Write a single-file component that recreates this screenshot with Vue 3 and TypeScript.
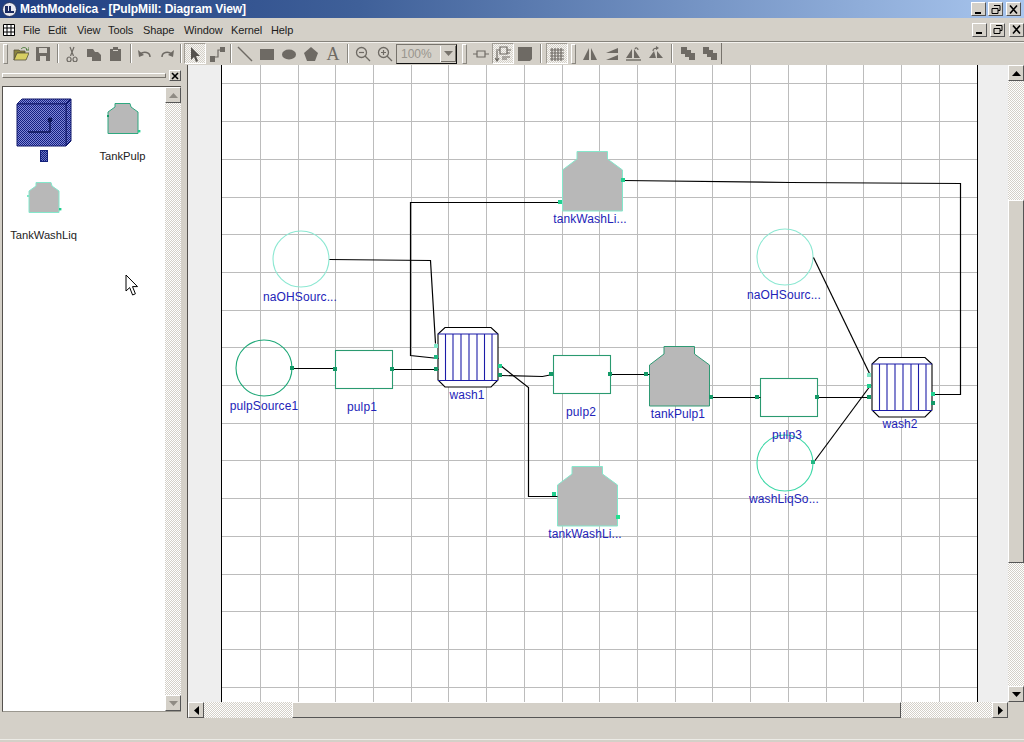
<script setup lang="ts">
interface Shape { d: string; fill?: string; stroke?: string; sw?: number }
interface Tool { kind: 'btn' | 'sep' | 'grip' | 'combo'; w: number; pressed?: boolean; txt?: string; shapes?: Shape[] }

const G = '#6e6a64'
const gs = (d: string): Shape => ({ d, fill: G })
const gl = (d: string, sw = 1.2): Shape => ({ d, fill: 'none', stroke: G, sw })
const btn = (shapes: Shape[], pressed = false): Tool => ({ kind: 'btn', w: 22, shapes, pressed })
const sep = (w: number): Tool => ({ kind: 'sep', w })

const tools: Tool[] = [
  { kind: 'grip', w: 10 },
  btn([
    { d: 'M1 14V4h5l1 1h5v2H4L1 14z', fill: '#8a8440', stroke: '#55523a', sw: 0.8 },
    { d: 'M1 14l3-7h12l-3 7z', fill: '#d8cf62', stroke: '#55523a', sw: 0.8 },
    { d: 'M8 3c2-2 4-2 6 0l-1 1h3v-3', fill: 'none', stroke: '#4c7a3c', sw: 1 },
  ]),
  btn([gs('M1 1h14v14H1z'), { d: 'M4 2h8v5H4z', fill: '#d4d0c8' }, { d: 'M5 10h6v5H5z', fill: '#d4d0c8' }]),
  sep(7),
  btn([gl('M6.5 10L10 1M9.5 10L6 1'), gl('M5 11a2 2.4 0 1 0 .1 0zM11 11a2 2.4 0 1 0 .1 0z')]),
  btn([gs('M1 3h6l2 3v5H1z'), gs('M6 6h6l3 3v6H6z')]),
  btn([gs('M2 3h3V1h5v2h3v12H2z'), { d: 'M5 4h5v1H5z', fill: '#d4d0c8' }]),
  sep(7),
  btn([gl('M13 11C13 6 7 5 3 8', 1.5), gs('M1 4l1 7 5-2z')]),
  btn([gl('M3 11C3 6 9 5 13 8', 1.5), gs('M15 4l-1 7-5-2z')]),
  sep(6),
  btn([{ d: 'M4 1v13l3-3 2 5 2-1-2-5h4z', fill: '#55524e' }], true),
  btn([gs('M1 10h5v6H1z'), gs('M11 1h5v5h-5z'), gl('M6 11h3V4h2')]),
  sep(6),
  btn([gl('M1 1L15 15', 1.4)]),
  btn([gs('M1 3h14v11H1z')]),
  btn([gs('M1 8.5a7 5 0 1 0 14 0a7 5 0 1 0-14 0z')]),
  btn([gs('M8 1l7 6-3 8H4L1 7z')]),
  { kind: 'btn', w: 22, txt: 'A' },
  sep(8),
  btn([gl('M1.5 6.5a5 5 0 1 0 10 0a5 5 0 1 0-10 0zM10 10l5 5', 1.3), gl('M4 6.5h5')]),
  btn([gl('M1.5 6.5a5 5 0 1 0 10 0a5 5 0 1 0-10 0zM10 10l5 5', 1.3), gl('M4 6.5h5M6.5 4v5')]),
  { kind: 'combo', w: 62 },
  { kind: 'grip', w: 12 },
  btn([gl('M4 5h8v6H4zM0 8h4M12 8h4')]),
  btn([gl('M5 1h7v7H5zM2 5v9M0 12l2 3 2-3M12 4h4M5 4H1M12 7h3M7 11h8M7 13h5')], true),
  btn([gs('M1 1h14v12l-2 2H1z')]),
  sep(10),
  btn([gl('M3 2v13M6 2v13M9 2v13M12 2v13M1 4h14M1 7h14M1 10h14M1 13h14')], true),
  { kind: 'grip', w: 11 },
  btn([gs('M7 2v12H1z'), gs('M9 2v12h6z')]),
  btn([gs('M14 2v5H2z'), gs('M14 9v5H2z')]),
  btn([gs('M6 3v9H0z'), gs('M8 3v9h6z'), gl('M0 14h15', 1.4), gl('M9 3c1-2 3-1 3 1')]),
  btn([gs('M8 12H1l5-7z'), gs('M9 12V5l6 7z'), gl('M5 5c0-3 3-3 4-2'), gs('M8 0l3 2-3 2z')]),
  sep(10),
  btn([gs('M1 1h6v3h4v3h4v7H9v-3H5V8H1z')]),
  btn([gs('M1 1h6v3h4v3h4v7H9v-3H5V8H1z')]),
]

const gridX = Array.from({ length: 19 }, (_, i) => Math.round(259.8 + i * 37.72) + 0.5)
const gridY = Array.from({ length: 17 }, (_, i) => Math.round(83.4 + i * 37.7) + 0.5)

const wires = [
  'M292 368H335',
  'M392 369H438',
  'M329 259L430 260L435 343',
  'M560 202H410V355L438 358',
  'M500 375L542 376L552 374',
  'M500 365L528 387V496H557',
  'M610 374H649',
  'M711 397H760',
  'M817 397H870',
  'M813 462L870 385',
  'M813 257L870 375',
  'M934 394H960V183L790 182L623 180',
]

const circles = [
  { cx: 301, cy: 259, color: '#8ce8d2' },
  { cx: 264, cy: 368, color: '#1fa878' },
  { cx: 785, cy: 257, color: '#8ce8d2' },
  { cx: 785, cy: 463, color: '#3fd8a8' },
]
const rects = [
  { x: 335, y: 350 },
  { x: 553, y: 355 },
  { x: 760, y: 378 },
]
const tanks = [
  { x: 562, y: 151, color: '#84e8cc' },
  { x: 557, y: 466, color: '#84e8cc' },
  { x: 649, y: 346, color: '#2f9a74' },
]
const washers = [
  { x: 438, y: 327 },
  { x: 872, y: 357 },
]
const washLines = [7.5, 15, 23, 31, 39, 46.5, 54]
const ports = [
  { x: 292, y: 368, c: '#149a68' }, { x: 335, y: 369, c: '#149a68' }, { x: 392, y: 369, c: '#149a68' },
  { x: 436, y: 346, c: '#7fe8c8' }, { x: 436, y: 357, c: '#22b884' }, { x: 436, y: 369, c: '#149a68' },
  { x: 500, y: 366, c: '#22d090' }, { x: 500, y: 375, c: '#149a68' }, { x: 551, y: 374, c: '#149a68' },
  { x: 610, y: 374, c: '#149a68' }, { x: 646, y: 374, c: '#149a68' }, { x: 623, y: 180, c: '#22d090' },
  { x: 560, y: 202, c: '#22d090' }, { x: 618, y: 517, c: '#22e090' }, { x: 554, y: 494, c: '#22d090' },
  { x: 711, y: 397, c: '#149a68' }, { x: 757, y: 397, c: '#149a68' }, { x: 817, y: 397, c: '#149a68' },
  { x: 869, y: 375, c: '#7fe8c8' }, { x: 869, y: 386, c: '#22d090' }, { x: 869, y: 397, c: '#149a68' },
  { x: 933, y: 394, c: '#22d090' }, { x: 933, y: 403, c: '#149a68' }, { x: 813, y: 462, c: '#22b884' },
]
const labels = [
  { x: 300, y: 301, t: 'naOHSourc...' },
  { x: 264, y: 410, t: 'pulpSource1' },
  { x: 362, y: 411, t: 'pulp1' },
  { x: 467, y: 399, t: 'wash1' },
  { x: 581, y: 416, t: 'pulp2' },
  { x: 678, y: 418, t: 'tankPulp1' },
  { x: 590, y: 223, t: 'tankWashLi...' },
  { x: 585, y: 538, t: 'tankWashLi...' },
  { x: 784, y: 299, t: 'naOHSourc...' },
  { x: 787, y: 439, t: 'pulp3' },
  { x: 784, y: 503, t: 'washLiqSo...' },
  { x: 900, y: 428, t: 'wash2' },
]
</script>

<template>
  <div class="app">
    <header class="title">
      <svg class="logo" width="15" height="15" viewBox="0 0 15 15">
        <circle cx="7.5" cy="7.5" r="7" fill="#e8e8f0" stroke="#20305a" />
        <path d="M3 11V4h3v5h1V4h2v5h3v2z" fill="#1a2a60" />
      </svg>
      <span class="title-text">MathModelica - [PulpMill: Diagram View]</span>
      <div class="wctl">
        <button class="wbtn"><svg width="13" height="11" viewBox="0 0 13 11"><path d="M3 8h6v2H3z" fill="#000" /></svg></button>
        <button class="wbtn"><svg width="13" height="11" viewBox="0 0 13 11"><path d="M5 1.5h6v5H9M3 4.5h6v5H3z M3 4.5h6 M5 1.5h6" fill="none" stroke="#000" /></svg></button>
        <button class="wbtn wclose"><svg width="13" height="11" viewBox="0 0 13 11"><path d="M3 1.5l7 8M10 1.5l-7 8" fill="none" stroke="#000" stroke-width="1.6" /></svg></button>
      </div>
    </header>

    <nav class="menu">
      <svg class="menu-icon" width="12" height="12" viewBox="0 0 12 12">
        <path d="M.5.5h11v11H.5zM4 .5v11M8 .5v11M.5 4h11M.5 8h11" fill="#fff" stroke="#000" />
      </svg>
      <div class="menu-items">
        <span>File</span><span>Edit</span><span>View</span><span>Tools</span>
        <span>Shape</span><span>Window</span><span>Kernel</span><span>Help</span>
      </div>
      <div class="wctl wctl-menu">
        <button class="wbtn"><svg width="13" height="11" viewBox="0 0 13 11"><path d="M3 8h6v2H3z" fill="#000" /></svg></button>
        <button class="wbtn"><svg width="13" height="11" viewBox="0 0 13 11"><path d="M5 1.5h6v5H9M3 4.5h6v5H3z M3 4.5h6" fill="none" stroke="#000" /></svg></button>
        <button class="wbtn wclose"><svg width="13" height="11" viewBox="0 0 13 11"><path d="M3 1.5l7 8M10 1.5l-7 8" fill="none" stroke="#000" stroke-width="1.6" /></svg></button>
      </div>
    </nav>

    <div class="toolbar">
      <div class="tools">
        <template v-for="(t, i) in tools" :key="i">
          <div v-if="t.kind === 'grip'" class="grip" :style="{ width: t.w + 'px' }"><i></i></div>
          <div v-else-if="t.kind === 'sep'" class="sep" :style="{ width: t.w + 'px' }"><i></i></div>
          <div v-else-if="t.kind === 'combo'" class="combo">
            <span>100%</span>
            <b><svg width="9" height="5" viewBox="0 0 9 5"><path d="M0 0h9L4.5 5z" fill="#77736c" /></svg></b>
          </div>
          <div v-else class="tool" :class="{ pressed: t.pressed }">
            <span v-if="t.txt" class="tool-a">{{ t.txt }}</span>
            <svg v-else width="16" height="16" viewBox="0 0 16 16">
              <path v-for="(s, j) in t.shapes" :key="j" :d="s.d" :fill="s.fill" :stroke="s.stroke" :stroke-width="s.sw" />
            </svg>
          </div>
        </template>
      </div>
    </div>

    <main class="main">
      <aside class="panel">
        <div class="panel-head">
          <div class="panel-grip"></div>
          <button class="panel-close"><svg width="8" height="8" viewBox="0 0 8 8"><path d="M1 1l6 6M7 1L1 7" stroke="#000" stroke-width="1.6" /></svg></button>
        </div>
        <div class="listbox">
          <div class="list">
            <div class="item">
              <svg width="64" height="56" viewBox="0 0 64 56">
                <defs>
                  <pattern id="dith" width="2" height="2" patternUnits="userSpaceOnUse">
                    <rect width="2" height="2" fill="#8088d8" />
                    <rect width="1" height="1" fill="#141f80" />
                    <rect x="1" y="1" width="1" height="1" fill="#141f80" />
                  </pattern>
                </defs>
                <path d="M5 10L10 5H59L54 10z" fill="url(#dith)" stroke="#10186a" />
                <path d="M54 10L59 5V47L54 52z" fill="url(#dith)" stroke="#10186a" />
                <path d="M5 10H54V52H5z" fill="url(#dith)" stroke="#10186a" />
                <path d="M16 38H38V26" fill="none" stroke="#0c1458" stroke-width="1.4" />
                <circle cx="38" cy="26" r="2.4" fill="#0c1458" />
              </svg>
              <span class="sel-label"></span>
            </div>
            <div class="item">
              <svg width="64" height="56" viewBox="0 0 64 56">
                <path d="M24 9.5H39L40 13L47 18V39.5H17V18L24 13z" fill="#b8b8b8" stroke="#2fa880" />
                <path d="M16 21h2v2h-2z" fill="#149a68" /><path d="M47 36h2.4v2.4H47z" fill="#22d090" />
              </svg>
              <span class="item-label">TankPulp</span>
            </div>
            <div class="item">
              <svg width="64" height="56" viewBox="0 0 64 56">
                <path d="M24 9.5H39L40 13L47 18V39.5H17V18L24 13z" fill="#b8b8b8" stroke="#84e8cc" />
                <path d="M15 22h2v2h-2z" fill="#7fe8c8" /><path d="M47 35h2.4v2.4H47z" fill="#22d090" />
              </svg>
              <span class="item-label">TankWashLiq</span>
            </div>
          </div>
          <div class="vscroll thin">
            <button class="sbtn"><svg width="9" height="5" viewBox="0 0 9 5"><path d="M0 5h9L4.5 0z" fill="#8f8b84" /></svg></button>
            <div class="track"></div>
            <button class="sbtn"><svg width="9" height="5" viewBox="0 0 9 5"><path d="M0 0h9L4.5 5z" fill="#8f8b84" /></svg></button>
          </div>
          <svg class="cursor" width="14" height="23" viewBox="0 0 14 23">
            <path d="M1 1V17L4.7 13.6L7.6 21L10.4 19.8L7.5 12.6H12.5z" fill="#fff" stroke="#000" />
          </svg>
        </div>
      </aside>

      <section class="work">
        <div class="work-row">
          <div class="gutter-left"></div>
          <svg class="diagram" width="755" height="637" viewBox="222 65 755 637">
            <rect x="222" y="65" width="755" height="637" fill="#fff" />
            <path v-for="x in gridX" :key="'x' + x" :d="`M${x} 65V702`" stroke="#bcbcbc" stroke-width="1" />
            <path v-for="y in gridY" :key="'y' + y" :d="`M222 ${y}H977`" stroke="#bcbcbc" stroke-width="1" />
            <circle v-for="c in circles" :key="c.cx + '-' + c.cy" :cx="c.cx" :cy="c.cy" r="28" fill="none" :stroke="c.color" stroke-width="1.1" />
            <rect v-for="r in rects" :key="r.x" :x="r.x + 0.5" :y="r.y + 0.5" width="57" height="38" fill="#fff" stroke="#2a9a70" stroke-width="1.1" />
            <path v-for="t in tanks" :key="t.x" :transform="`translate(${t.x} ${t.y})`" d="M15 .5H45.5V8L60.5 19V60H.5V19L15 8z" fill="#b8b8b8" :stroke="t.color" />
            <g v-for="w in washers" :key="w.x" :transform="`translate(${w.x} ${w.y})`">
              <path d="M7 .5H53L60 7V53L53 60H7L0 53V7z" fill="#fff" stroke="#000" stroke-width="1.1" />
              <path d="M0 7H60M0 53.5H60" stroke="#1c1ca8" stroke-width="1.2" />
              <path v-for="l in washLines" :key="l" :d="`M${l} 7V53.5`" stroke="#1c1ca8" stroke-width="1.1" />
            </g>
            <g transform="translate(.5 .5)">
              <path v-for="w in wires" :key="w" :d="w" fill="none" stroke="#000" stroke-width="1.2" />
            </g>
            <rect v-for="p in ports" :key="p.x + '_' + p.y" :x="p.x - 2" :y="p.y - 2" width="4" height="4" :fill="p.c" />
            <text v-for="l in labels" :key="l.x + l.t" :x="l.x" :y="l.y" class="node-label" text-anchor="middle">{{ l.t }}</text>
          </svg>
          <div class="gutter-right"></div>
          <div class="vscroll">
            <button class="sbtn"><svg width="9" height="5" viewBox="0 0 9 5"><path d="M0 5h9L4.5 0z" fill="#000" /></svg></button>
            <div class="track v-before"></div>
            <div class="thumb v-thumb"></div>
            <div class="track"></div>
            <button class="sbtn"><svg width="9" height="5" viewBox="0 0 9 5"><path d="M0 0h9L4.5 5z" fill="#000" /></svg></button>
          </div>
        </div>
        <div class="hscroll">
          <button class="sbtn"><svg width="5" height="9" viewBox="0 0 5 9"><path d="M5 0v9L0 4.5z" fill="#000" /></svg></button>
          <div class="track h-before"></div>
          <div class="thumb h-thumb"></div>
          <div class="track"></div>
          <button class="sbtn"><svg width="5" height="9" viewBox="0 0 5 9"><path d="M0 0v9L5 4.5z" fill="#000" /></svg></button>
          <div class="corner"></div>
        </div>
      </section>
    </main>

    <footer class="status"></footer>
  </div>
</template>

<style scoped>
.app {
  width: 1024px;
  height: 742px;
  display: flex;
  flex-direction: column;
  overflow: hidden;
  background: #d4d0c8;
  font-family: "Liberation Sans", Arial, sans-serif;
}
button { padding: 0; margin: 0; font: inherit; }

.title {
  height: 18px;
  display: flex;
  align-items: center;
  padding-left: 2px;
  background: linear-gradient(90deg, #1f3d80 0%, #3f6099 35%, #a9c6ee 100%);
  flex: none;
}
.title-text {
  margin-left: 3px;
  color: #fff;
  font-size: 12px;
  font-weight: 700;
  letter-spacing: -0.1px;
  white-space: nowrap;
}
.wctl {
  margin-left: auto;
  display: flex;
  gap: 2px;
  padding-right: 3px;
}
.wbtn {
  width: 15px;
  height: 14px;
  display: flex;
  align-items: center;
  justify-content: center;
  background: #d4d0c8;
  border: 1px solid;
  border-color: #fff #555 #555 #fff;
}
.wclose { margin-left: 1px; }

.menu {
  height: 24px;
  flex: none;
  display: flex;
  align-items: center;
  box-sizing: border-box;
  border-bottom: 1px solid #86837c;
}
.menu-icon { margin-left: 3px; }
.menu-items {
  margin-left: 8px;
  display: grid;
  grid-template-columns: 25px 29px 31px 35px 41px 47px 40px auto;
  font-size: 11px;
  letter-spacing: -0.1px;
  color: #1c1c1c;
}
.wctl-menu { gap: 3px; padding-right: 0; }
.wctl-menu .wclose { margin-left: 1px; }

.toolbar {
  height: 23px;
  flex: none;
  border-top: 1px solid #f4f2ee;
  box-sizing: border-box;
}
.tools {
  display: inline-flex;
  height: 21px;
  border-right: 1px solid #77736c;
  align-items: center;
  padding-left: 0;
}
.grip { height: 20px; display: flex; justify-content: center; }
.grip i {
  width: 3px;
  height: 18px;
  border: 1px solid;
  border-color: #fff #8a8780 #8a8780 #fff;
}
.sep { height: 20px; display: flex; justify-content: center; }
.sep i {
  width: 0;
  height: 19px;
  border-left: 1px solid #8a8780;
  border-right: 1px solid #fff;
}
.tool {
  width: 22px;
  height: 21px;
  flex: none;
  box-sizing: border-box;
  display: flex;
  align-items: center;
  justify-content: center;
}
.pressed {
  border: 1px solid;
  border-color: #a09c94 #fff #fff #a09c94;
  background: repeating-conic-gradient(#d4d0c8 0 25%, #f6f5f2 0 50%) 0 0 / 2px 2px;
}
.tool-a {
  font-family: "Liberation Serif", serif;
  font-size: 18px;
  line-height: 18px;
  color: #6e6a64;
}
.combo {
  width: 61px;
  height: 20px;
  margin-right: 1px;
  box-sizing: border-box;
  flex: none;
  display: flex;
  align-items: center;
  justify-content: space-between;
  border: 1px solid;
  border-color: #77736c #111 #111 #77736c;
  font-size: 12px;
  color: #98958e;
  padding-left: 4px;
}
.combo b {
  width: 15px;
  height: 16px;
  display: flex;
  align-items: center;
  justify-content: center;
  border-left: 1px solid #fff;
  box-shadow: inset -1px -1px 0 #77736c;
  background: #d4d0c8;
}

.main { flex: none; height: 653px; display: flex; }

.panel {
  width: 188px;
  flex: none;
  box-sizing: border-box;
  border-right: 1px solid #55524e;
  padding-left: 2px;
  display: flex;
  flex-direction: column;
}
.panel-head {
  height: 21px;
  display: flex;
  align-items: center;
  padding-right: 6px;
}
.panel-grip {
  flex: 1;
  height: 3px;
  border: 1px solid;
  border-color: #fff #77736c #77736c #fff;
  margin-right: 3px;
}
.panel-close {
  width: 12px;
  height: 11px;
  display: flex;
  align-items: center;
  justify-content: center;
  background: #d4d0c8;
  border: 1px solid;
  border-color: #fff #555 #555 #fff;
}
.listbox {
  position: relative;
  width: 179px;
  height: 626px;
  box-sizing: border-box;
  display: flex;
  background: #fff;
  border-left: 1px solid #55524e;
  border-top: 1px solid #55524e;
  border-bottom: 1px solid #9a978f;
}
.list {
  flex: 1;
  padding: 7px 0 0 1px;
  display: grid;
  grid-template-columns: 79px 79px;
  grid-auto-rows: 79px;
  align-content: start;
  overflow: hidden;
}
.item { display: flex; flex-direction: column; align-items: center; }
.item-label {
  font-size: 11.2px;
  line-height: 12px;
  color: #222;
  white-space: nowrap;
}
.sel-label {
  width: 8px;
  height: 12px;
  background: repeating-conic-gradient(#12207a 0 25%, #6a74c8 0 50%) 0 0 / 2px 2px;
  border: 1px solid #12207a;
  box-sizing: border-box;
}
.cursor { position: absolute; left: 122px; top: 187px; }

.work { flex: 1; display: flex; flex-direction: column; }
.work-row { height: 637px; display: flex; }
.gutter-left {
  width: 33px;
  background: #eeeeee;
  border-right: 1px solid #000;
}
.gutter-right {
  width: 30px;
  background: #eeeeee;
  border-left: 1px solid #000;
}
.diagram { display: block; flex: none; }
.node-label {
  font-family: "Liberation Sans", Arial, sans-serif;
  font-size: 12px;
  letter-spacing: 0.1px;
  fill: #2323b8;
}

.vscroll { width: 16px; flex: none; display: flex; flex-direction: column; }
.thin { height: 100%; }
.hscroll { height: 16px; display: flex; }
.sbtn {
  width: 16px;
  height: 16px;
  flex: none;
  display: flex;
  align-items: center;
  justify-content: center;
  background: #d4d0c8;
  border: 1px solid;
  border-color: #fff #555 #555 #fff;
}
.track {
  flex: 1;
  background: repeating-conic-gradient(#d4d0c8 0 25%, #fff 0 50%) 0 0 / 2px 2px;
}
.v-before { flex: none; height: 119px; }
.v-thumb { height: 363px; }
.h-before { flex: none; width: 88px; }
.h-thumb { width: 609px; }
.thumb {
  flex: none;
  box-sizing: border-box;
  background: #d4d0c8;
  border: 1px solid;
  border-color: #fff #555 #555 #fff;
}
.corner { width: 16px; flex: none; background: #d4d0c8; }

.status {
  flex: 1;
  background: linear-gradient(#d4d0c8 0 21px, #ecebe6 21px 22px, #d4d0c8 22px);
}
</style>

<style>
html, body { margin: 0; padding: 0; background: #d4d0c8; }
</style>
